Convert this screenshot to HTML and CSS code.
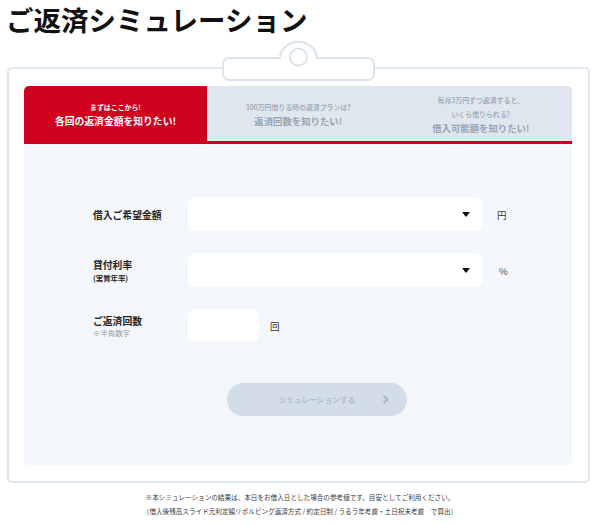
FILE: index.html
```html
<!DOCTYPE html>
<html lang="ja">
<head>
    <meta charset="UTF-8">
    <meta name="viewport" content="width=device-width, initial-scale=1.0">
    <title>ご返済シミュレーション</title>
    <link rel="stylesheet" href="styles.css">
</head>
<body>
    <h1 class="page-title">ご返済シミュレーション</h1>

    <div class="sim-card">
        <!-- clip on top of the board -->
        <svg class="sim-clip" width="156" height="42" viewBox="0 0 156 42">
            <path d="M7 17 H58 A18.5 16 0 0 1 95 17 H146 A6 6 0 0 1 152 23 V33 A6 6 0 0 1 146 39 H7 A6 6 0 0 1 1 33 V23 A6 6 0 0 1 7 17 Z" fill="#fff" stroke="#dbe4ed" stroke-width="2"/>
            <circle cx="76.5" cy="16" r="8.5" fill="#fff" stroke="#dbe4ed" stroke-width="2"/>
        </svg>

        <div class="sim-panel">
            <div class="sim-tabs">
                <div class="sim-tab active">
                    <span class="tab-sub">まずはここから!</span>
                    <span class="tab-main">各回の返済金額を知りたい!</span>
                </div>
                <div class="sim-tab">
                    <span class="tab-sub">100万円借りる時の返済プランは?</span>
                    <span class="tab-main">返済回数を知りたい!</span>
                </div>
                <div class="sim-tab">
                    <span class="tab-sub">毎月3万円ずつ返済すると、<br>いくら借りられる?</span>
                    <span class="tab-main">借入可能額を知りたい!</span>
                </div>
            </div>

            <div class="sim-body">
                <div class="form-row">
                    <div class="form-label">借入ご希望金額</div>
                    <div class="select-box"><span class="select-arrow"></span></div>
                    <div class="form-unit">円</div>
                </div>
                <div class="form-row">
                    <div class="form-label">貸付利率<small>(実質年率)</small></div>
                    <div class="select-box"><span class="select-arrow"></span></div>
                    <div class="form-unit pct">%</div>
                </div>
                <div class="form-row">
                    <div class="form-label">ご返済回数<small class="note">※半角数字</small></div>
                    <div class="input-box"></div>
                    <div class="form-unit">回</div>
                </div>

                <button class="sim-button" disabled>
                    シミュレーションする
                    <svg class="btn-arrow" width="8" height="9" viewBox="0 0 8 9"><path d="M1.5 1 L5.5 4.5 L1.5 8" fill="none" stroke="#a9b8c7" stroke-width="2.2"/></svg>
                </button>
            </div>
        </div>
    </div>

    <p class="sim-note">※本シミュレーションの結果は、本日をお借入日とした場合の参考値です。目安としてご利用ください。<br>（借入後残高スライド元利定額リボルビング返済方式 / 約定日制 / うるう年考慮・土日祝未考慮　で算出）</p>
</body>
</html>
```

FILE: styles.css
```css
* {
    box-sizing: border-box;
}
body {
    margin: 0;
    font-family: "Noto Sans CJK JP", "Noto Sans", sans-serif;
    color: #222;
    background: #fff;
}
.page-title {
    margin: 0;
    padding: 0 0 0 6px;
    font-size: 27.5px;
    line-height: 38px;
    font-weight: 700;
    color: #111;
}
.sim-card {
    position: relative;
    width: 583px;
    margin: 29px 0 0 7px;
    padding: 17px 16px 16px 15px;
    border: 2px solid #dfe7ef;
    border-radius: 5px;
}
.sim-clip {
    position: absolute;
    left: 213px;
    top: -28px;
}
.sim-panel {
    border-radius: 5px;
    overflow: hidden;
    background: #f3f6fa;
}
.sim-tabs {
    display: flex;
    height: 58px;
    border-bottom: 3px solid #d0011e;
}
.sim-tab {
    flex: 1;
    display: flex;
    flex-direction: column;
    align-items: center;
    justify-content: center;
    background: #dfe6ee;
    color: #96a3b2;
    text-align: center;
    padding-top: 2px;
}
.sim-tab.active {
    flex: 0 0 183px;
    background: #d0011e;
    color: #fff;
}
.tab-sub {
    font-size: 6.9px;
    line-height: 14px;
    font-weight: 500;
}
.sim-tab.active .tab-sub {
    font-weight: 700;
}
.tab-main {
    font-size: 9.4px;
    line-height: 15px;
    font-weight: 700;
}
.sim-tab.active .tab-main {
    font-size: 9.8px;
}
.sim-body {
    padding: 54px 0 48px 69px;
    height: 321px;
}
.form-row {
    display: flex;
    align-items: center;
    height: 33px;
    margin-bottom: 23px;
}
.form-row:nth-child(3) {
    margin-top: 1px;
    height: 31px;
    margin-bottom: 0;
}
.form-label {
    width: 95px;
    font-size: 9.8px;
    font-weight: 700;
    line-height: 14px;
    color: #222;
    display: flex;
    flex-direction: column;
}
.form-label small {
    font-size: 7.4px;
    line-height: 12px;
    font-weight: 700;
}
.form-label small.note {
    color: #999;
    font-weight: 400;
    line-height: 9px;
}
.select-box {
    position: relative;
    width: 295px;
    height: 33px;
    background: #fff;
    border-radius: 6px;
}
.select-arrow {
    position: absolute;
    right: 13px;
    top: 14px;
    border-left: 4px solid transparent;
    border-right: 4px solid transparent;
    border-top: 5px solid #111;
}
.input-box {
    width: 71px;
    height: 31px;
    background: #fff;
    border-radius: 6px;
}
.form-unit {
    margin-left: 14px;
    font-size: 9.5px;
    color: #333;
}
.form-unit.pct {
    margin-left: 16px;
    color: #555;
}
.input-box + .form-unit {
    margin-left: 11px;
}
.sim-button {
    display: flex;
    align-items: center;
    justify-content: center;
    position: relative;
    width: 180px;
    height: 33px;
    margin: 42px 0 0 134px;
    border: none;
    border-radius: 17px;
    background: #d3dde7;
    color: #afbecd;
    font-family: inherit;
    font-size: 7.7px;
    font-weight: 700;
    padding: 0;
}
.btn-arrow {
    position: absolute;
    right: 17px;
    top: 12px;
}
.sim-note {
    margin: 8px 0 0;
    text-align: center;
    font-size: 6.6px;
    line-height: 13.5px;
    color: #3a3a3a;
}
```
